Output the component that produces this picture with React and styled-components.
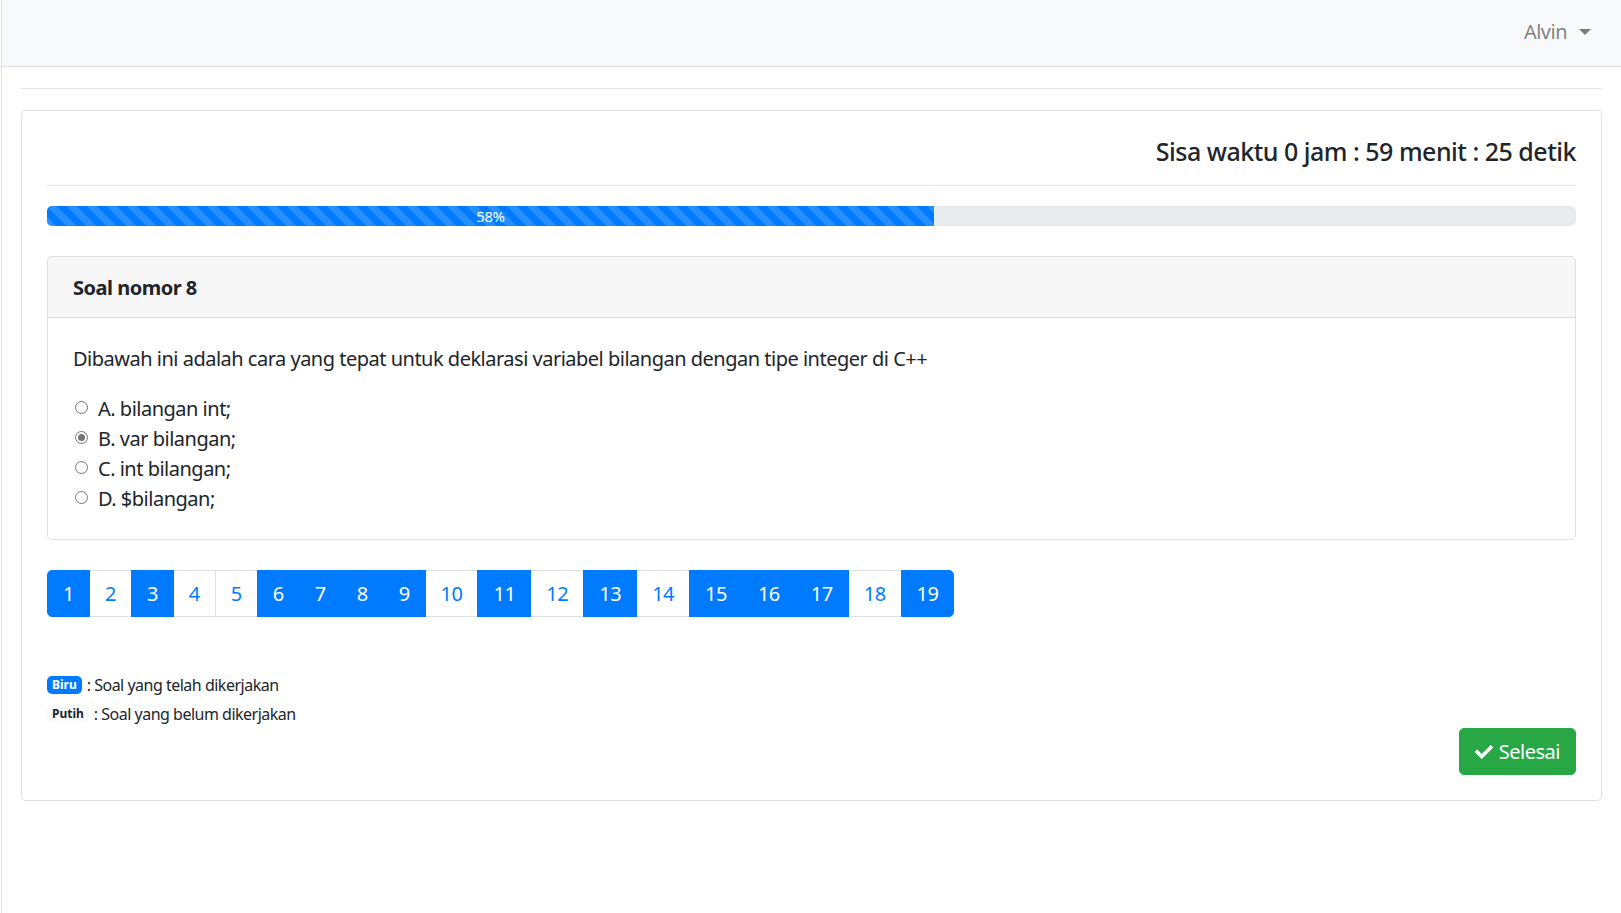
import React from 'react'
import styled, { createGlobalStyle, css } from 'styled-components'
import { FaCheck } from 'react-icons/fa'

const GlobalStyle = createGlobalStyle`
  html, body {
    margin: 0;
    padding: 0;
    background: #fff;
  }
  body {
    font-family: 'Noto Sans', 'Open Sans', sans-serif;
    font-size: 20px;
    line-height: 1.5;
    letter-spacing: -0.5px;
    color: #212529;
  }
  * {
    box-sizing: border-box;
  }
`

const Shell = styled.div`
  margin-left: 1px;
  min-height: 913px;
  border-left: 1px solid #dee2e6;
`
const Navbar = styled.nav`
  display: flex;
  align-items: center;
  justify-content: flex-end;
  height: 67px;
  padding: 0 30px 3px 0;
  background: #f8f9fa;
  border-bottom: 1px solid #dee2e6;
`
const UserToggle = styled.a`
  display: flex;
  align-items: center;
  color: rgba(0, 0, 0, 0.5);
  line-height: 30px;
  cursor: pointer;

  &::after {
    content: '';
    margin-left: 12px;
    border-top: 6px solid;
    border-right: 6px solid transparent;
    border-left: 6px solid transparent;
  }
`
const Content = styled.main`
  padding: 0 19px;
`
const Rule = styled.hr`
  margin: ${props => props.$top}px 0 ${props => props.$bottom}px;
  border: 0;
  border-top: 1px solid rgba(0, 0, 0, 0.1);
`
const Card = styled.section`
  border: 1px solid rgba(0, 0, 0, 0.125);
  border-radius: 5px;
  background: #fff;
  padding: 25px;
`
const Timer = styled.h5`
  margin: 0;
  font-size: 25px;
  font-weight: 500;
  line-height: 30px;
  text-align: right;
`
const Progress = styled.div`
  display: flex;
  height: 20px;
  overflow: hidden;
  background: #e9ecef;
  border-radius: 5px;
`
const ProgressBar = styled.div`
  display: flex;
  align-items: center;
  justify-content: center;
  color: #fff;
  font-size: 15px;
  background-color: #007bff;
  background-image: linear-gradient(
    45deg,
    rgba(255, 255, 255, 0.15) 25%,
    transparent 25%,
    transparent 50%,
    rgba(255, 255, 255, 0.15) 50%,
    rgba(255, 255, 255, 0.15) 75%,
    transparent 75%,
    transparent
  );
  background-size: 20px 20px;
`
const QuestionCard = styled.div`
  margin-top: 30px;
  border: 1px solid rgba(0, 0, 0, 0.125);
  border-radius: 5px;
  overflow: hidden;
`
const QuestionHeader = styled.div`
  padding: 16px 25px 14px;
  background: rgba(0, 0, 0, 0.03);
  border-bottom: 1px solid rgba(0, 0, 0, 0.125);
  font-weight: 700;
  line-height: 30px;
`
const QuestionBody = styled.div`
  padding: 26px 25px 25px;
`
const QuestionText = styled.p`
  margin: 0 0 20px;
`
const Option = styled.label`
  display: flex;
  align-items: center;
  height: 30px;
`
const Radio = styled.input.attrs({ type: 'radio' })`
  appearance: none;
  position: relative;
  width: 13px;
  height: 13px;
  margin: -3px 10px 0 2px;
  border: 1px solid #767676;
  border-radius: 50%;
  background: #fff;

  &:checked::after {
    content: '';
    position: absolute;
    inset: 2px;
    border-radius: 50%;
    background: #757575;
  }
`
const Pagination = styled.ul`
  display: flex;
  margin: 30px 0 0;
  padding: 0;
  list-style: none;
`
const PageLink = styled.li`
  position: relative;
  padding: 10px 15px;
  margin-left: -1px;
  font-size: 20px;
  line-height: 25px;
  color: #007bff;
  background: #fff;
  border: 1px solid #dee2e6;
  cursor: pointer;

  &:first-child {
    margin-left: 0;
    border-radius: 5px 0 0 5px;
  }
  &:last-child {
    border-radius: 0 5px 5px 0;
  }

  ${props => props.$active && css`
    z-index: 2;
    color: #fff;
    background: #007bff;
    border-color: #007bff;
  `}
`
const Legend = styled.div`
  margin-top: 53px;
  font-size: 16px;
`
const LegendRow = styled.div`
  display: flex;
  align-items: center;
  height: 29px;
`
const Badge = styled.span`
  display: inline-block;
  margin-right: 5px;
  padding: 3px 5px;
  font-size: 12px;
  font-weight: 700;
  line-height: 1;
  letter-spacing: 0;
  border-radius: 5px;
  color: ${props => props.$light ? '#212529' : '#fff'};
  background: ${props => props.$light ? '#f8f9fa' : '#007bff'};
`
const Actions = styled.div`
  display: flex;
  justify-content: flex-end;
`
const SubmitButton = styled.button`
  display: flex;
  align-items: center;
  gap: 6px;
  padding: 8px 15px 7px;
  font-family: inherit;
  font-size: 20px;
  line-height: 30px;
  letter-spacing: -0.5px;
  color: #fff;
  background: #28a745;
  border: 1px solid #28a745;
  border-radius: 5px;
  cursor: pointer;
`

const options = ['A. bilangan int;', 'B. var bilangan;', 'C. int bilangan;', 'D. $bilangan;']
const answered = [1, 3, 6, 7, 8, 9, 11, 13, 15, 16, 17, 19]
const pages = Array.from({ length: 19 }, (_, i) => i + 1)

export default function App() {
  return (
    <Shell>
      <GlobalStyle />
      <Navbar>
        <UserToggle>Alvin</UserToggle>
      </Navbar>
      <Content>
        <Rule $top={21} $bottom={21} />
        <Card>
          <Timer>Sisa waktu 0 jam : 59 menit : 25 detik</Timer>
          <Rule $top={19} $bottom={20} />
          <Progress>
            <ProgressBar style={{ width: '58%' }}>58%</ProgressBar>
          </Progress>
          <QuestionCard>
            <QuestionHeader>Soal nomor 8</QuestionHeader>
            <QuestionBody>
              <QuestionText>
                Dibawah ini adalah cara yang tepat untuk deklarasi variabel bilangan dengan tipe integer di C++
              </QuestionText>
              {options.map((text, i) => (
                <Option key={text}>
                  <Radio name="jawaban" defaultChecked={i === 1} />
                  {text}
                </Option>
              ))}
            </QuestionBody>
          </QuestionCard>
          <Pagination>
            {pages.map(n => (
              <PageLink key={n} $active={answered.includes(n)}>{n}</PageLink>
            ))}
          </Pagination>
          <Legend>
            <LegendRow>
              <Badge>Biru</Badge>: Soal yang telah dikerjakan
            </LegendRow>
            <LegendRow>
              <Badge $light>Putih</Badge>: Soal yang belum dikerjakan
            </LegendRow>
          </Legend>
          <Actions>
            <SubmitButton>
              <FaCheck size={18} />
              Selesai
            </SubmitButton>
          </Actions>
        </Card>
      </Content>
    </Shell>
  )
}
